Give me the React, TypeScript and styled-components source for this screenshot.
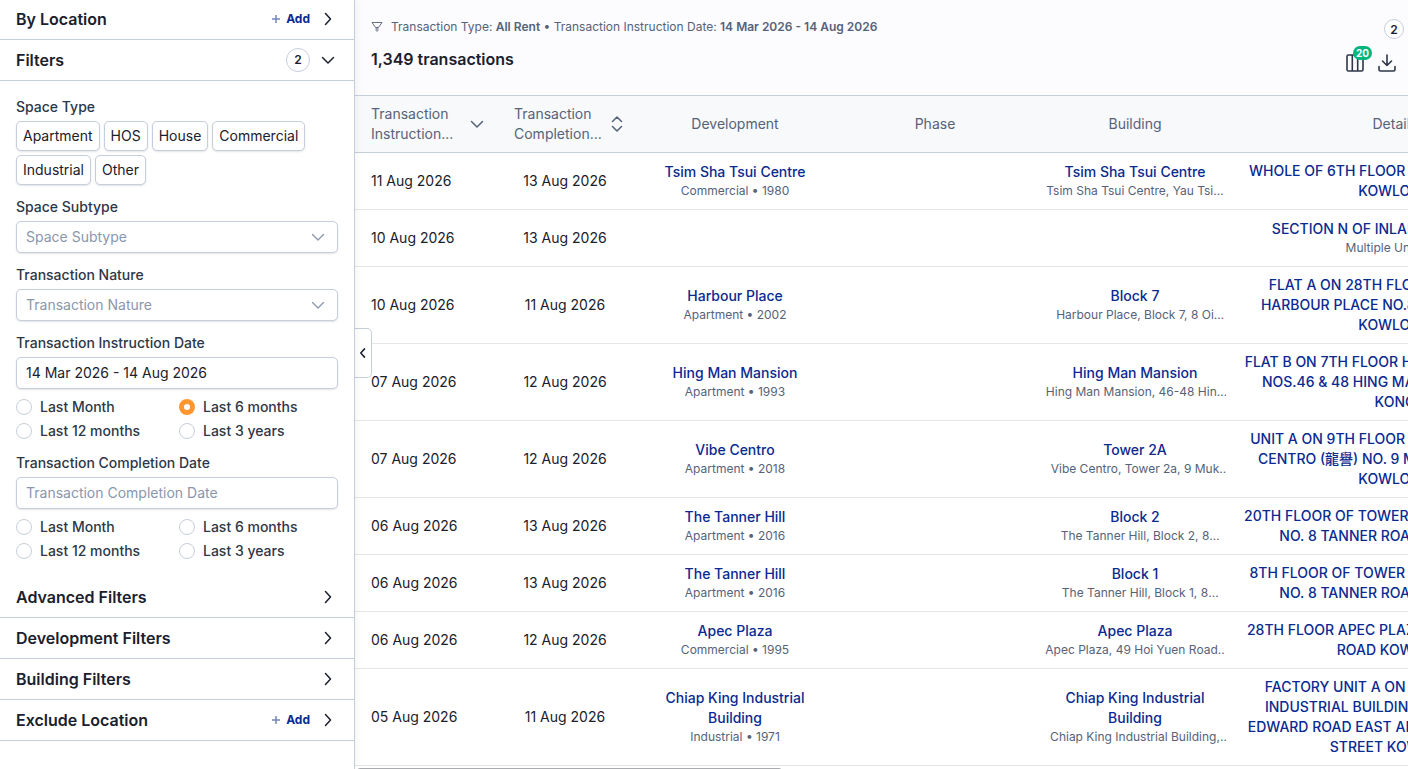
import React from "react";
import styled, { createGlobalStyle } from "styled-components";

const c = {
  ink: "#1a202c",
  label: "#2d3748",
  muted: "#56627a",
  faint: "#8a96ac",
  link: "#0a2a90",
  line: "#c6cddb",
  rowLine: "#e4e6ea",
  orange: "#ff9630",
  green: "#00b67a",
};

const Global = createGlobalStyle`
  *, *::before, *::after { box-sizing: border-box; }
  body {
    margin: 0;
    font-family: Inter, "Noto Sans CJK TC", sans-serif;
    font-size: 14px;
    line-height: 20px;
    color: ${c.ink};
    background: #fff;
    -webkit-font-smoothing: antialiased;
  }
  button, input, select { font: inherit; color: inherit; }
  h1, h2, p, fieldset { margin: 0; padding: 0; border: 0; font: inherit; }
  a { color: inherit; text-decoration: none; }
`;

const Page = styled.div`
  display: flex;
  height: 100vh;
  overflow: hidden;
`;

const Sidebar = styled.aside`
  flex: none;
  width: 355px;
  border-right: 1px solid ${c.line};
  background: #fff;
  box-shadow: 0 0 8px rgba(26, 32, 44, 0.08);
  z-index: 1;
  overflow: hidden;
`;

const SectionHeader = styled.header`
  display: flex;
  align-items: center;
  height: 41px;
  padding: 0 16px;
  border-bottom: 1px solid ${c.line};
  &:first-child {
    height: 40px;
    padding-bottom: 1px;
  }
`;

const SectionTitle = styled.h2`
  flex: 1;
  font-size: 16px;
  font-weight: 600;
`;

const AddButton = styled.button`
  display: flex;
  align-items: center;
  gap: 6px;
  padding: 0;
  margin-right: 8px;
  border: 0;
  background: none;
  color: ${c.link};
  font-size: 12px;
  font-weight: 700;
`;

const IconButton = styled.button<{ $pad?: number }>`
  position: relative;
  display: flex;
  padding: ${(p) => p.$pad ?? 0}px;
  border: 0;
  background: none;
  color: ${c.ink};
`;

const Count = styled.span<{ $size: number }>`
  display: grid;
  place-items: center;
  width: ${(p) => p.$size}px;
  height: ${(p) => p.$size}px;
  border: 1px solid ${c.line};
  border-radius: 50%;
  background: #fff;
  font-size: 12px;
  font-weight: 600;
`;

const CountSlot = styled.span`
  margin-right: 8px;
`;

const FilterBody = styled.form`
  display: flex;
  flex-direction: column;
  gap: 12px;
  padding: 16px;
`;

const Field = styled.div`
  display: flex;
  flex-direction: column;
  gap: 4px;
`;

const Label = styled.label`
  color: ${c.label};
  font-weight: 500;
`;

const Chips = styled.div`
  display: flex;
  flex-wrap: wrap;
  gap: 4px;
`;

const Chip = styled.button`
  height: 30px;
  padding: 0 6px;
  border: 1px solid ${c.line};
  border-radius: 5px;
  background: #fff;
  box-shadow: 0 1px 2px rgba(26, 32, 44, 0.12);
`;

const boxed = `
  width: 100%;
  height: 32px;
  padding: 0 9px;
  border: 1px solid ${c.line};
  border-radius: 5px;
  background: #fff;
  box-shadow: 0 1px 2px rgba(26, 32, 44, 0.12);
  outline: none;
`;

const TextBox = styled.input`
  ${boxed}
  padding-bottom: 2px;
  &::placeholder { color: ${c.faint}; opacity: 1; }
`;

const SelectWrap = styled.div`
  position: relative;
  color: ${c.faint};
  svg {
    position: absolute;
    right: 12px;
    top: 8px;
    pointer-events: none;
  }
`;

const Select = styled.select`
  ${boxed}
  appearance: none;
  color: ${c.faint};
`;

const Options = styled.fieldset`
  display: grid;
  grid-template-columns: 1fr 1fr;
  gap: 4px;
  margin-top: 4px;
  min-width: 0;
`;

const Option = styled.label`
  display: flex;
  align-items: center;
  gap: 8px;
  color: ${c.label};
  font-weight: 500;
`;

const Radio = styled.input`
  appearance: none;
  width: 16px;
  height: 16px;
  margin: 0;
  border: 1px solid ${c.line};
  border-radius: 50%;
  background: #fff;
  &:checked { border: 5px solid ${c.orange}; }
`;

const Main = styled.main`
  position: relative;
  flex: 1;
  min-width: 0;
  overflow: hidden;
`;

const Collapse = styled.button`
  position: absolute;
  left: 0;
  top: 328px;
  display: grid;
  place-items: center;
  width: 17px;
  height: 50px;
  padding: 0;
  border: 1px solid ${c.line};
  border-left: 0;
  border-radius: 0 5px 5px 0;
  background: #fff;
`;

const Summary = styled.header`
  display: flex;
  justify-content: space-between;
  height: 96px;
  padding: 17px 4px 0 16px;
  border-bottom: 1px solid ${c.line};
  background: #fcfcfe;
`;

const Criteria = styled.p`
  display: flex;
  align-items: center;
  gap: 8px;
  margin-bottom: 12px;
  color: ${c.muted};
  font-size: 12px;
  b { font-weight: 600; }
`;

const Total = styled.h1`
  font-size: 16px;
  font-weight: 600;
`;

const Tools = styled.div`
  display: flex;
  flex-direction: column;
  align-items: flex-end;
  gap: 14px;
  padding-top: 2px;
`;

const ToolRow = styled.div`
  display: flex;
  gap: 12px;
  padding-right: 7px;
`;

const Badge = styled.span`
  position: absolute;
  left: 8px;
  top: -7px;
  padding: 0 3px;
  border-radius: 7px;
  background: ${c.green};
  color: #fff;
  font-size: 10px;
  font-weight: 700;
  line-height: 14px;
`;

const Table = styled.table`
  table-layout: fixed;
  width: 1200px;
  border-collapse: separate;
  border-spacing: 0;
  text-align: center;
`;

const Th = styled.th`
  height: 57px;
  padding: 8px 10px;
  border-bottom: 1px solid ${c.line};
  background: #f7f9fb;
  color: ${c.muted};
  font-weight: 400;
`;

const SortButton = styled.button<{ $inset: number }>`
  display: flex;
  align-items: center;
  justify-content: space-between;
  width: 100%;
  padding: 0 0 0 ${(p) => p.$inset}px;
  border: 0;
  background: none;
  text-align: left;
`;

const Td = styled.td<{ $start?: boolean }>`
  height: 57px;
  padding: 8px ${(p) => (p.$start ? 16 : 9)}px;
  border-bottom: 1px solid ${c.rowLine};
  text-align: ${(p) => (p.$start ? "left" : "center")};
`;

const RowLink = styled.a`
  display: block;
  color: ${c.link};
  font-weight: 500;
`;

const Address = styled(RowLink)`
  white-space: pre;
`;

const Note = styled.div`
  display: -webkit-box;
  -webkit-box-orient: vertical;
  -webkit-line-clamp: 1;
  overflow: hidden;
  color: ${c.muted};
  font-size: 12px;
  line-height: 18px;
`;

const ScrollTrack = styled.div`
  padding: 2px;
`;

const ScrollThumb = styled.div`
  width: 40.5%;
  height: 7px;
  border-radius: 4px;
  background: #a9abae;
`;

const paths = {
  right: "M5.500 2.500 10.500 8l-5 5.500",
  left: "M10 2.500 5 8l5 5.500",
  down: "m2.500 5.500 5.500 5.500 5.500-5.500",
  sort: "M3.500 5.500 8 1l4.500 4.500M3.500 10.500 8 15l4.500-4.500",
};

function Icon({ name, size = 16, stroke = 1.5 }: { name: keyof typeof paths; size?: number; stroke?: number }) {
  return (
    <svg width={size} height={size} viewBox="0 0 16 16" fill="none" stroke="currentColor"
      strokeWidth={stroke} strokeLinecap="round" strokeLinejoin="round" aria-hidden="true">
      <path d={paths[name]} />
    </svg>
  );
}

function Section({ title, open, add, count }: { title: string; open?: boolean; add?: boolean; count?: number }) {
  return (
    <SectionHeader>
      <SectionTitle>{title}</SectionTitle>
      {add && (
        <AddButton type="button">
          <svg width="8" height="8" viewBox="0 0 8 8" stroke="#7385bb" strokeWidth="1.5" aria-hidden="true">
            <path d="M4 0v8M0 4h8" />
          </svg>
          Add
        </AddButton>
      )}
      {count && <CountSlot><Count $size={24}>{count}</Count></CountSlot>}
      <IconButton type="button" $pad={2} aria-label={title}>
        <Icon name={open ? "down" : "right"} />
      </IconButton>
    </SectionHeader>
  );
}

function SelectField({ id, label }: { id: string; label: string }) {
  return (
    <Field>
      <Label htmlFor={id}>{label}</Label>
      <SelectWrap>
        <Select id={id}><option>{label}</option></Select>
        <Icon name="down" stroke={1.3} />
      </SelectWrap>
    </Field>
  );
}

const ranges = ["Last Month", "Last 6 months", "Last 12 months", "Last 3 years"];

function DateField({ id, label, value = "", picked }: { id: string; label: string; value?: string; picked?: string }) {
  return (
    <Field>
      <Label htmlFor={id}>{label}</Label>
      <TextBox id={id} placeholder={label} defaultValue={value} />
      <Options aria-label={label}>
        {ranges.map((r) => (
          <Option key={r}>
            <Radio type="radio" name={id} defaultChecked={r === picked} />
            {r}
          </Option>
        ))}
      </Options>
    </Field>
  );
}

type Row = { start: string; end: string; dev?: [string, string]; building?: [string, string]; address: string; note?: string };

const rows: Row[] = [
  { start: "11 Aug 2026", end: "13 Aug 2026", dev: ["Tsim Sha Tsui Centre", "Commercial • 1980"], building: ["Tsim Sha Tsui Centre", "Tsim Sha Tsui Centre, Yau Tsim Mong"], address: "WHOLE OF 6TH FLOOR NO.66 MODY ROAD\nKOWLOON" },
  { start: "10 Aug 2026", end: "13 Aug 2026", address: "SECTION N OF INLAND LOT NO.1234", note: "Multiple Units • 4" },
  { start: "10 Aug 2026", end: "11 Aug 2026", dev: ["Harbour Place", "Apartment • 2002"], building: ["Block 7", "Harbour Place, Block 7, 8 Oi King Street"], address: "FLAT A ON 28TH FLOOR TOWER 7 OF\nHARBOUR PLACE NO.8 OI KING STREET\nKOWLOON" },
  { start: "07 Aug 2026", end: "12 Aug 2026", dev: ["Hing Man Mansion", "Apartment • 1993"], building: ["Hing Man Mansion", "Hing Man Mansion, 46-48 Hing Man Street"], address: "FLAT B ON 7TH FLOOR HING MAN MANSION\nNOS.46 & 48 HING MAN STREET HONG\nKONG" },
  { start: "07 Aug 2026", end: "12 Aug 2026", dev: ["Vibe Centro", "Apartment • 2018"], building: ["Tower 2A", "Vibe Centro, Tower 2a, 9 Muk Ning Street"], address: "UNIT A ON 9TH FLOOR OF TOWER 2A VIBE\nCENTRO (龍譽) NO. 9 MUK NING STREET\nKOWLOON" },
  { start: "06 Aug 2026", end: "13 Aug 2026", dev: ["The Tanner Hill", "Apartment • 2016"], building: ["Block 2", "The Tanner Hill, Block 2, 8 Tanner Road"], address: "20TH FLOOR OF TOWER 2 THE TANNER HILL\nNO. 8 TANNER ROAD HONG KONG" },
  { start: "06 Aug 2026", end: "13 Aug 2026", dev: ["The Tanner Hill", "Apartment • 2016"], building: ["Block 1", "The Tanner Hill, Block 1, 8 Tanner Road"], address: "8TH FLOOR OF TOWER 1 THE TANNER HILL\nNO. 8 TANNER ROAD HONG KONG" },
  { start: "06 Aug 2026", end: "12 Aug 2026", dev: ["Apec Plaza", "Commercial • 1995"], building: ["Apec Plaza", "Apec Plaza, 49 Hoi Yuen Road.."], address: "28TH FLOOR APEC PLAZA NO.49 HOI YUEN\nROAD KOWLOON" },
  { start: "05 Aug 2026", end: "11 Aug 2026", dev: ["Chiap King Industrial Building", "Industrial • 1971"], building: ["Chiap King Industrial Building", "Chiap King Industrial Building, 114 King Fuk Street"], address: "FACTORY UNIT A ON 7TH FLOOR KING\nINDUSTRIAL BUILDING NO.714 PRINCE\nEDWARD ROAD EAST AND NO.22 KING FUK\nSTREET KOWLOON" },
];

function Titled({ pair }: { pair?: [string, string] }) {
  if (!pair) return null;
  return (
    <>
      <RowLink href="#">{pair[0]}</RowLink>
      <Note>{pair[1]}</Note>
    </>
  );
}

export default function App() {
  return (
    <Page>
      <Global />
      <Sidebar>
        <Section title="By Location" add />
        <Section title="Filters" open count={2} />
        <FilterBody>
          <Field role="group" aria-label="Space Type">
            <Label as="span">Space Type</Label>
            <Chips>
              {["Apartment", "HOS", "House", "Commercial", "Industrial", "Other"].map((t) => (
                <Chip key={t} type="button">{t}</Chip>
              ))}
            </Chips>
          </Field>
          <SelectField id="subtype" label="Space Subtype" />
          <SelectField id="nature" label="Transaction Nature" />
          <DateField id="instruction" label="Transaction Instruction Date" value="14 Mar 2026 - 14 Aug 2026" picked="Last 6 months" />
          <DateField id="completion" label="Transaction Completion Date" />
        </FilterBody>
        <Section title="Advanced Filters" />
        <Section title="Development Filters" />
        <Section title="Building Filters" />
        <Section title="Exclude Location" add />
      </Sidebar>
      <Main>
        <Summary>
          <div>
            <Criteria>
              <svg width="12" height="12" viewBox="0 0 12 12" fill="none" stroke="currentColor" strokeWidth="1" strokeLinejoin="round" aria-hidden="true">
                <path d="M1 1.500h10L7.500 6.500h-3z" strokeWidth="0.9" />
                <path d="M4.500 6.500h3v3l-1.500 1.500-1.500-1.500z" fill="currentColor" stroke="none" opacity="0.6" />
              </svg>
              <span>Transaction Type: <b>All Rent</b> • Transaction Instruction Date: <b>14 Mar 2026 - 14 Aug 2026</b></span>
            </Criteria>
            <Total>1,349 transactions</Total>
          </div>
          <Tools>
            <Count $size={20}>2</Count>
            <ToolRow>
              <IconButton type="button" aria-label="Columns">
                <svg width="20" height="20" viewBox="0 0 20 20" fill="none" stroke={c.label} strokeWidth="1.6" aria-hidden="true">
                  <rect x="2" y="2" width="16" height="16" rx="1.5" />
                  <path d="M7.300 2v16M12.700 2v16" />
                </svg>
                <Badge>20</Badge>
              </IconButton>
              <IconButton type="button" aria-label="Download">
                <svg width="20" height="20" viewBox="0 0 20 20" fill="none" stroke={c.label} strokeWidth="1.6" strokeLinecap="round" strokeLinejoin="round" aria-hidden="true">
                  <path d="M10 2v10.500M5.500 8l4.500 4.500L14.500 8M2 13.500v3q0 1.500 1.500 1.500h13q1.500 0 1.500-1.500v-3" />
                </svg>
              </IconButton>
            </ToolRow>
          </Tools>
        </Summary>
        <Table>
          <colgroup>
            <col width="140" />
            <col width="140" />
            <col width="200" />
            <col width="200" />
            <col width="200" />
            <col width="320" />
          </colgroup>
          <thead>
            <tr>
              <Th>
                <SortButton type="button" $inset={6}>
                  <span>Transaction<br />Instruction...</span>
                  <Icon name="down" />
                </SortButton>
              </Th>
              <Th>
                <SortButton type="button" $inset={9}>
                  <span>Transaction<br />Completion...</span>
                  <Icon name="sort" />
                </SortButton>
              </Th>
              <Th>Development</Th>
              <Th>Phase</Th>
              <Th>Building</Th>
              <Th>Details</Th>
            </tr>
          </thead>
          <tbody>
            {rows.map((r, i) => (
              <tr key={i}>
                <Td $start>{r.start}</Td>
                <Td>{r.end}</Td>
                <Td><Titled pair={r.dev} /></Td>
                <Td />
                <Td><Titled pair={r.building} /></Td>
                <Td>
                  <Address href="#">{r.address}</Address>
                  {r.note && <Note>{r.note}</Note>}
                </Td>
              </tr>
            ))}
          </tbody>
        </Table>
        <ScrollTrack><ScrollThumb /></ScrollTrack>
        <Collapse type="button" aria-label="Collapse filters"><Icon name="left" size={12} stroke={2} /></Collapse>
      </Main>
    </Page>
  );
}
